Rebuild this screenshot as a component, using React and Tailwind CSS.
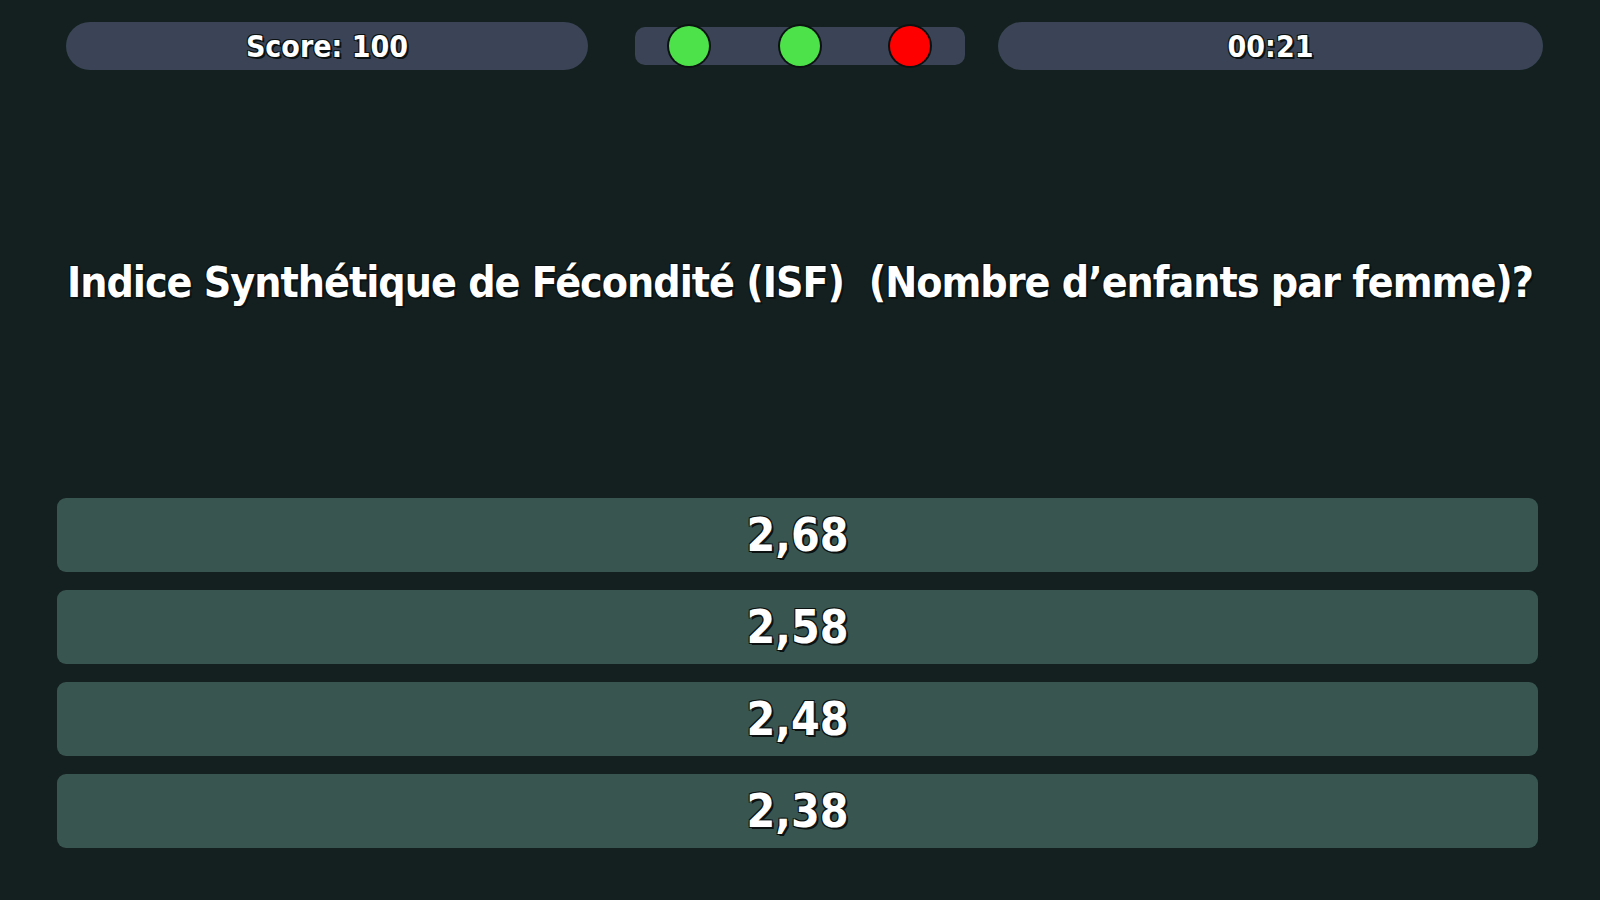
import React from "react";

const answers = ["2,68", "2,58", "2,48", "2,38"];
const lives = ["bg-[#4de14a]", "bg-[#4de14a]", "bg-[#ff0000]"];

const shadow = "[text-shadow:2px_2px_0_#0b1211,-1px_-1px_0_#0b1211,1px_-1px_0_#0b1211,-1px_1px_0_#0b1211]";

export default function App() {
  return (
    <div className="min-h-screen w-full bg-[#13201f] font-['DejaVu_Sans',sans-serif] font-stretch-condensed text-white">
      {/* Top bar */}
      <div className="flex items-center pt-[22px] pl-[66px]">
        <div className={`flex h-[48px] w-[522px] items-center justify-center rounded-full bg-[#3a4456] text-[30px] font-bold ${shadow}`}>
          Score: 100
        </div>
        <div className="ml-[47px] flex h-[38px] w-[330px] items-center justify-between rounded-[10px] bg-[#3a4456] pl-[34px] pr-[35px]">
          {lives.map((c, i) => (
            <span key={i} className={`h-[40px] w-[40px] rounded-full ${c} ring-2 ring-[#0b1211]`} />
          ))}
        </div>
        <div className={`ml-[33px] flex h-[48px] w-[545px] items-center justify-center rounded-full bg-[#3a4456] text-[30px] font-bold ${shadow}`}>
          00:21
        </div>
      </div>

      {/* Question */}
      <div className="flex h-[428px] items-center justify-center pb-[2px]">
        <h1 className={`whitespace-pre text-[42.5px] font-bold tracking-[-1px] ${shadow}`}>
          {"Indice Synthétique de Fécondité (ISF)  (Nombre d’enfants par femme)?"}
        </h1>
      </div>

      {/* Answers */}
      <div className="flex flex-col gap-[18px] pl-[57px] pr-[62px]">
        {answers.map((a) => (
          <button
            key={a}
            className={`flex h-[74px] w-full items-center justify-center rounded-[9px] bg-[#395550] text-[46px] font-bold ${shadow}`}
          >
            {a}
          </button>
        ))}
      </div>
    </div>
  );
}
